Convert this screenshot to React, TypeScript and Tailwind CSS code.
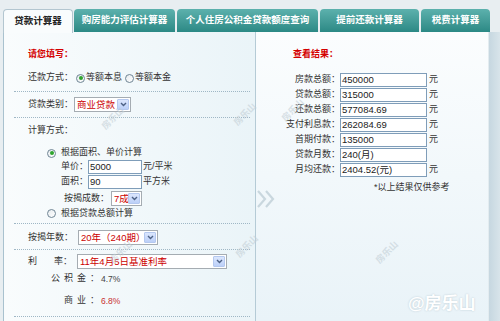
import type { ReactNode } from "react";

const TABS = [
  { label: "购房能力评估计算器", w: "w-[101px]", ml: "ml-[1px]" },
  { label: "个人住房公积金贷款额度查询", w: "w-[141px]", ml: "ml-[2px]" },
  { label: "提前还款计算器", w: "w-[99px]", ml: "ml-[2px]" },
  { label: "税费计算器", w: "w-[69px]", ml: "ml-[2px]" },
];

const RESULTS = [
  { label: "房款总额：", value: "450000", unit: true },
  { label: "贷款总额：", value: "315000", unit: true },
  { label: "还款总额：", value: "577084.69", unit: true },
  { label: "支付利息款：", value: "262084.69", unit: true },
  { label: "首期付款：", value: "135000", unit: true },
  { label: "贷款月数：", value: "240(月)", unit: false },
  { label: "月均还款：", value: "2404.52(元)", unit: true },
];

const MARKS = [
  "left-[100px] top-[112px]",
  "left-[232px] top-[108px]",
  "left-[280px] top-[104px]",
  "left-[108px] top-[246px]",
  "left-[234px] top-[240px]",
  "left-[374px] top-[246px]",
];

function Radio({ checked }: { checked?: boolean }) {
  return (
    <span className="flex h-[9px] w-[9px] shrink-0 items-center justify-center rounded-full border border-[#6f8594] bg-gradient-to-br from-[#e6ebee] to-white">
      {checked && <span className="h-[4px] w-[4px] rounded-full bg-[#2ea42e]" />}
    </span>
  );
}

function Select({ text, w }: { text: string; w: string }) {
  return (
    <div
      className={`flex h-[15px] shrink-0 items-center justify-between overflow-hidden border border-[#a5acb2] bg-white pl-[2px] pr-[1px] text-[9.5px] text-[#cc0000] ${w}`}
    >
      <span className="overflow-hidden leading-none">{text}</span>
      <span className="flex h-[11px] w-[12px] shrink-0 items-center justify-center rounded-[1px] border border-[#b4c8ef] bg-gradient-to-b from-[#dbe6fd] to-[#bcd0f8]">
        <svg width="7" height="5" viewBox="0 0 7 5">
          <path d="M1 1 L3.5 3.5 L6 1" fill="none" stroke="#4d6185" strokeWidth="1.4" />
        </svg>
      </span>
    </div>
  );
}

function Field({ value, w }: { value: string; w: string }) {
  return (
    <div
      className={`flex h-[14px] shrink-0 items-center border border-[#7f9db9] bg-white pl-[1px] text-[9.5px] leading-none text-[#222] ${w}`}
    >
      {value}
    </div>
  );
}

function Dots({ mt }: { mt: string }) {
  return <div className={`ml-[10px] mr-[5px] border-t border-dotted border-[#9fb7c5] ${mt}`} />;
}

function Row({ children, className }: { children: ReactNode; className: string }) {
  return <div className={`flex items-center whitespace-nowrap ${className}`}>{children}</div>;
}

export default function App() {
  return (
    <div className="relative h-[321px] w-[500px] overflow-hidden whitespace-nowrap bg-[#e8eef1] font-['Liberation_Sans','Noto_Sans_CJK_SC',sans-serif] text-[9px] text-[#333]">
      {/* tabs */}
      <div className="flex h-[32px] items-end pl-[3px]">
        <div className="relative z-10 -mb-[1px] flex h-[24px] w-[70px] items-center justify-center rounded-t-[4px] border border-b-0 border-[#b3c6d0] bg-[#f9fcfd] text-[9.5px] font-bold text-[#222]">
          贷款计算器
        </div>
        {TABS.map((t) => (
          <div
            key={t.label}
            className={`flex h-[23px] items-center justify-center rounded-t-[4px] bg-gradient-to-b from-[#5cb1ad] to-[#2b8985] text-[9.5px] font-bold text-white ${t.w} ${t.ml}`}
          >
            {t.label}
          </div>
        ))}
      </div>

      {/* body */}
      <div className="flex h-[289px] pl-[3px]">
        <div className="flex w-[485px] border-l border-[#a9c2cf]">
          {/* left column */}
          <div className="flex w-[251px] flex-col bg-gradient-to-r from-[#f9fcfd] to-[#eaf4f8]">
            <Row className="mt-[16px] h-[14px] pl-[24px]">
              <span className="font-bold text-[#d40000]">请您填写：</span>
            </Row>
            <Row className="mt-[9px] h-[14px] pl-[24px]">
              <span>还款方式：</span>
              <span className="ml-[3px]"><Radio checked /></span>
              <span className="ml-[1px]">等额本息</span>
              <span className="ml-[3px]"><Radio /></span>
              <span className="ml-[1px]">等额本金</span>
            </Row>
            <Dots mt="mt-[6px]" />
            <Row className="mt-[5px] h-[15px] pl-[24px]">
              <span>贷款类别：</span>
              <span className="ml-[1px]"><Select text="商业贷款" w="w-[57px]" /></span>
            </Row>
            <Dots mt="mt-[5px]" />
            <Row className="mt-[6px] h-[14px] pl-[24px]">
              <span>计算方式：</span>
            </Row>
            <Row className="mt-[8px] h-[14px] pl-[43px]">
              <Radio checked />
              <span className="ml-[5px]">根据面积、单价计算</span>
            </Row>
            <Row className="h-[14px] pl-[57px]">
              <span className="w-[27px] shrink-0">单价：</span>
              <Field value="5000" w="w-[54px]" />
              <span className="ml-[1px]">元/平米</span>
            </Row>
            <Row className="mt-[1px] h-[14px] pl-[57px]">
              <span className="w-[27px] shrink-0">面积：</span>
              <Field value="90" w="w-[54px]" />
              <span className="ml-[1px]">平方米</span>
            </Row>
            <Row className="mt-[2px] h-[15px] pl-[60px]">
              <span className="w-[47px] shrink-0">按揭成数：</span>
              <Select text="7成" w="w-[31px]" />
            </Row>
            <Row className="mt-[1px] h-[13px] pl-[43px]">
              <Radio />
              <span className="ml-[5px]">根据贷款总额计算</span>
            </Row>
            <Dots mt="mt-[3px]" />
            <Row className="mt-[6px] h-[15px] pl-[24px]">
              <span className="w-[50px] shrink-0">按揭年数：</span>
              <Select text="20年（240期）" w="w-[80px]" />
            </Row>
            <Dots mt="mt-[4px]" />
            <Row className="mt-[4px] h-[15px] pl-[24px]">
              <span className="w-[49px] shrink-0">
                利<span className="ml-[17px]">率：</span>
              </span>
              <Select text="11年4月5日基准利率" w="w-[150px]" />
            </Row>
            <Row className="mt-[3px] h-[14px] pl-[47px]">
              <span className="w-[50px] shrink-0 tracking-[4px]">公积金：</span>
              <span className="text-[8.5px] text-[#444]">4.7%</span>
            </Row>
            <Row className="mt-[8px] h-[14px] pl-[60px]">
              <span className="w-[37px] shrink-0 tracking-[4px]">商业：</span>
              <span className="text-[8.5px] text-[#c83030]">6.8%</span>
            </Row>
            <Dots mt="mt-[8px]" />
          </div>

          {/* divider */}
          <div className="relative w-[1px] bg-[#b5cbd6]">
            <svg className="absolute left-[1px] top-[158px]" width="20" height="18" viewBox="0 0 20 18">
              <path d="M2 1 L9 9 L2 17 M10 1 L17 9 L10 17" fill="none" stroke="#c9d7de" strokeWidth="2.2" />
            </svg>
          </div>

          {/* right column */}
          <div className="flex flex-1 flex-col bg-gradient-to-b from-[#fbfdfe] to-[#e9f3f8]">
            <Row className="mt-[16px] h-[14px] pl-[37px]">
              <span className="font-bold text-[#d40000]">查看结果：</span>
            </Row>
            <div className="mt-[11px] flex flex-col gap-[1px]">
              {RESULTS.map((r) => (
                <Row key={r.label} className="h-[14px]">
                  <span className="w-[84px] shrink-0 text-right">{r.label}</span>
                  <Field value={r.value} w="w-[87px]" />
                  {r.unit && <span className="ml-[2px]">元</span>}
                </Row>
              ))}
            </div>
            <Row className="mt-[4px] h-[14px] pl-[118px]">
              <span>*以上结果仅供参考</span>
            </Row>
          </div>
        </div>
        <div className="flex-1 border-l border-[#e3ecf0] bg-gradient-to-r from-[#c6d7e0] to-[#d8e4ea]" />
      </div>

      {/* watermarks */}
      {MARKS.map((m) => (
        <span
          key={m}
          className={`pointer-events-none absolute -rotate-45 text-[9px] font-bold text-[#c3cfd6] opacity-60 ${m}`}
        >
          房乐山
        </span>
      ))}
      <span className="pointer-events-none absolute left-[408px] top-[291px] text-[17px] font-bold text-white [text-shadow:0_0_2px_#b8c8d0]">
        @房乐山
      </span>
    </div>
  );
}
